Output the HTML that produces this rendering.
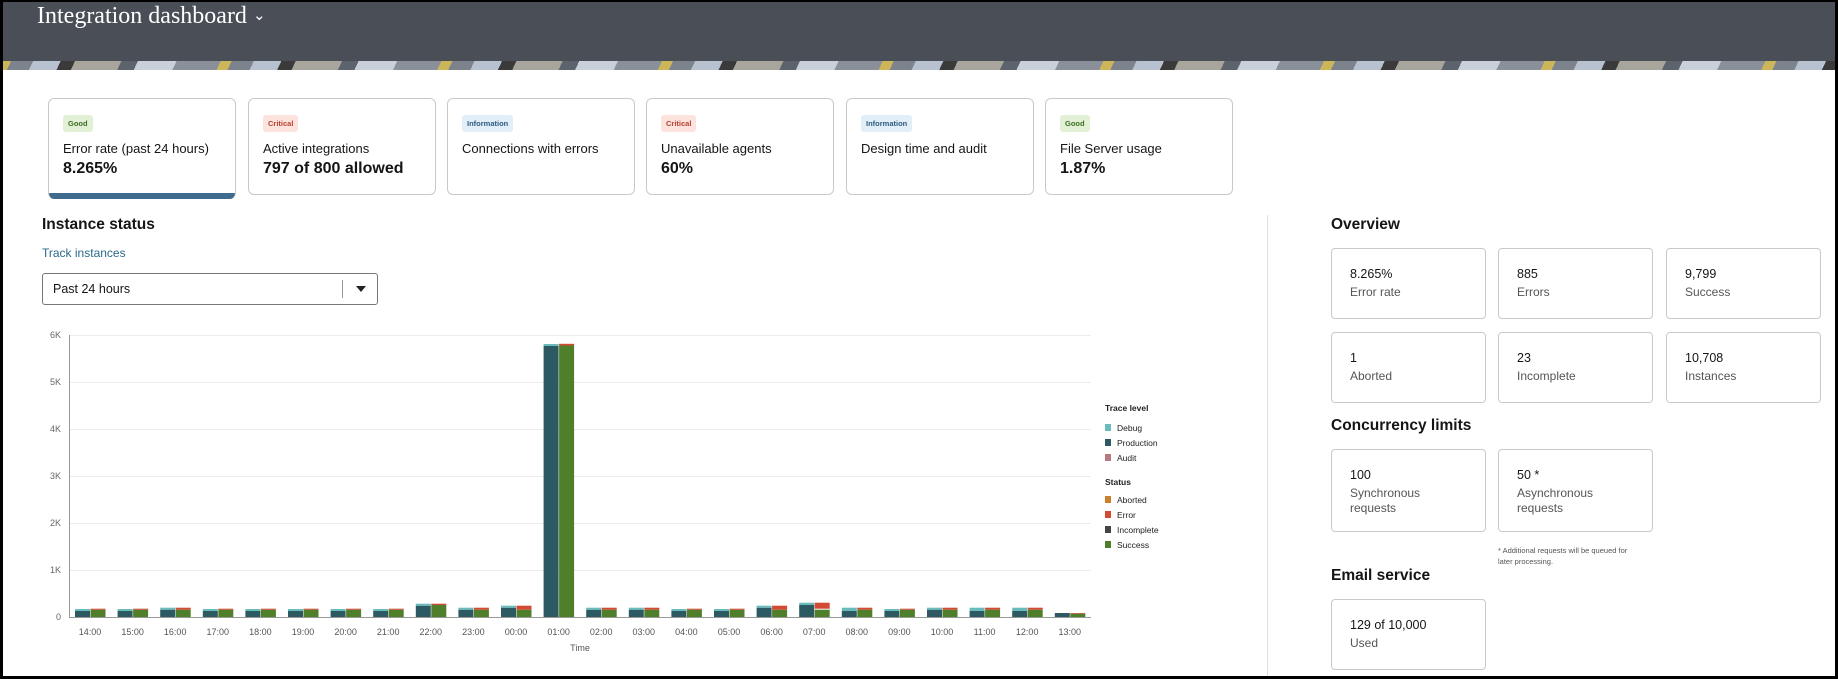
<!DOCTYPE html>
<html><head><meta charset="utf-8"><style>
*{margin:0;padding:0;box-sizing:border-box}
body{width:1838px;height:679px;overflow:hidden;background:#fff;font-family:"Liberation Sans",sans-serif;color:#161513;position:relative}
.frame{position:absolute;left:0;top:0;width:1838px;height:679px;border:3px solid #000;border-top-width:2px;pointer-events:none;z-index:10}
.hdr{position:absolute;left:0;top:0;width:1838px;height:61px;background:#4a4e57}
.pat{position:absolute;left:0;top:61px;width:1838px;height:9px;background:repeating-linear-gradient(115deg,#cdb65a 0 10px,#7d838c 10px 30px,#b8c1cf 30px 55px,#3a3a3a 55px 68px,#a8a59c 68px 110px,#5d636c 110px 125px,#c9d0da 125px 160px,#8a9099 160px 200px)}
.title{position:absolute;left:37px;top:3px;font-family:"Liberation Serif",serif;font-size:24px;color:#fff}
.kpi{position:absolute;top:98px;width:188px;height:97px;border:1px solid #c9c9c9;border-radius:6px;background:#fff;overflow:hidden}
.kpi .b{position:absolute;left:14px;top:16px;font-size:7.5px;font-weight:bold;padding:4px 5px;border-radius:3px}
.good{background:#e2f1d6;color:#3c6e21}.crit{background:#fde3de;color:#b3412f}.info{background:#e2eef8;color:#2c5c80}
.kpi .l{position:absolute;left:14px;top:42px;font-size:13px}
.kpi .v{position:absolute;left:14px;top:61px;font-size:16px;font-weight:bold}
.h{position:absolute;font-size:15.5px;font-weight:bold}
.card{position:absolute;width:155px;border:1px solid #c9c9c9;border-radius:4px;background:#fff}
.card .n{position:absolute;left:18px;top:18px;font-size:12.5px}
.card .t{position:absolute;left:18px;top:36px;font-size:12px;color:#555;line-height:15px}
</style></head><body>
<div class="hdr"></div><div class="pat"></div>
<div class="title">Integration dashboard <span style="font-family:'Liberation Sans';font-size:15px;position:relative;top:-3px">&#8964;</span></div>

<div class="kpi" style="left:48px;height:101px;border-bottom:none"><span class="b good">Good</span><div class="l">Error rate (past 24 hours)</div><div class="v">8.265%</div><div style="position:absolute;left:0;bottom:0;width:100%;height:6px;background:#3f6b8e"></div></div>
<div class="kpi" style="left:248px"><span class="b crit">Critical</span><div class="l">Active integrations</div><div class="v">797 of 800 allowed</div></div>
<div class="kpi" style="left:447px"><span class="b info">Information</span><div class="l">Connections with errors</div></div>
<div class="kpi" style="left:646px"><span class="b crit">Critical</span><div class="l">Unavailable agents</div><div class="v">60%</div></div>
<div class="kpi" style="left:846px"><span class="b info">Information</span><div class="l">Design time and audit</div></div>
<div class="kpi" style="left:1045px"><span class="b good">Good</span><div class="l">File Server usage</div><div class="v">1.87%</div></div>

<div style="position:absolute;left:1267px;top:215px;width:1px;height:464px;background:#e0e0e0"></div>

<div class="h" style="left:42px;top:216px">Instance status</div>
<div style="position:absolute;left:42px;top:246px;font-size:12px;color:#2a6a8c">Track instances</div>
<div style="position:absolute;left:42px;top:273px;width:336px;height:32px;border:1px solid #777;border-radius:3px">
<span style="position:absolute;left:10px;top:8px;font-size:12.5px">Past 24 hours</span>
<span style="position:absolute;right:34px;top:6px;width:1px;height:18px;background:#999"></span>
<svg style="position:absolute;right:11px;top:12px" width="10" height="6"><path d="M0 0H10L5 6Z" fill="#222"/></svg>
</div>

<svg style="position:absolute;left:0;top:320px" width="1250" height="359" viewBox="0 320 1250 359">
<defs>
<g id="A"><rect x="-15" y="0" width="15" height="6" fill="#2d5a62"/><rect x="-15" y="6" width="15" height="2" fill="#6abcbc"/><rect x="0.5" y="0" width="15" height="7.3" fill="#4f7f2a"/><rect x="0.5" y="7.3" width="15" height="1" fill="#d24a34"/></g>
<g id="B"><rect x="-15" y="0" width="15" height="7.3" fill="#2d5a62"/><rect x="-15" y="7.3" width="15" height="2" fill="#6abcbc"/><rect x="0.5" y="0" width="15" height="7.3" fill="#4f7f2a"/><rect x="0.5" y="7.3" width="15" height="2" fill="#d24a34"/></g>
<g id="C"><rect x="-15" y="0" width="15" height="9.3" fill="#2d5a62"/><rect x="-15" y="9.3" width="15" height="2" fill="#6abcbc"/><rect x="0.5" y="0" width="15" height="7.3" fill="#4f7f2a"/><rect x="0.5" y="7.3" width="15" height="4" fill="#d24a34"/></g>
<g id="D"><rect x="-15" y="0" width="15" height="6" fill="#2d5a62"/><rect x="-15" y="6" width="15" height="3.3" fill="#6abcbc"/><rect x="0.5" y="0" width="15" height="7.3" fill="#4f7f2a"/><rect x="0.5" y="7.3" width="15" height="2" fill="#d24a34"/></g>
</defs>
<g stroke="#ececec" stroke-width="1">
<line x1="69" y1="335.5" x2="1091" y2="335.5"/><line x1="69" y1="382.5" x2="1091" y2="382.5"/><line x1="69" y1="429.5" x2="1091" y2="429.5"/><line x1="69" y1="476.5" x2="1091" y2="476.5"/><line x1="69" y1="523.5" x2="1091" y2="523.5"/><line x1="69" y1="570.5" x2="1091" y2="570.5"/>
</g>
<line x1="69.5" y1="335" x2="69.5" y2="617" stroke="#999"/>
<line x1="69" y1="617.5" x2="1091" y2="617.5" stroke="#999"/>
<g font-size="9" fill="#666" text-anchor="end" font-family="Liberation Sans">
<text x="61" y="338">6K</text><text x="61" y="385">5K</text><text x="61" y="432">4K</text><text x="61" y="479">3K</text><text x="61" y="526">2K</text><text x="61" y="573">1K</text><text x="61" y="620">0</text>
</g>
<g transform="translate(90,617) scale(1,-1)"><use href="#A"/></g>
<g transform="translate(132.6,617) scale(1,-1)"><use href="#A"/></g>
<g transform="translate(175.2,617) scale(1,-1)"><use href="#B"/></g>
<g transform="translate(217.8,617) scale(1,-1)"><use href="#A"/></g>
<g transform="translate(260.4,617) scale(1,-1)"><use href="#A"/></g>
<g transform="translate(303,617) scale(1,-1)"><use href="#A"/></g>
<g transform="translate(345.6,617) scale(1,-1)"><use href="#A"/></g>
<g transform="translate(388.2,617) scale(1,-1)"><use href="#A"/></g>
<g transform="translate(430.8,617) scale(1,-1)"><rect x="-15" y="0" width="15" height="11.3" fill="#2d5a62"/><rect x="-15" y="11.3" width="15" height="2" fill="#6abcbc"/><rect x="0.5" y="0" width="15" height="12" fill="#4f7f2a"/><rect x="0.5" y="12" width="15" height="1.3" fill="#d24a34"/></g>
<g transform="translate(473.4,617) scale(1,-1)"><use href="#B"/></g>
<g transform="translate(516,617) scale(1,-1)"><use href="#C"/></g>
<g transform="translate(558.6,617) scale(1,-1)"><rect x="-15" y="0" width="15" height="271" fill="#2d5a62"/><rect x="-15" y="271" width="15" height="2" fill="#6abcbc"/><rect x="0.5" y="0" width="15" height="271.5" fill="#4f7f2a"/><rect x="0.5" y="271.5" width="15" height="1.7" fill="#d24a34"/></g>
<g transform="translate(601.2,617) scale(1,-1)"><use href="#B"/></g>
<g transform="translate(643.8,617) scale(1,-1)"><use href="#B"/></g>
<g transform="translate(686.4,617) scale(1,-1)"><use href="#A"/></g>
<g transform="translate(729,617) scale(1,-1)"><use href="#A"/></g>
<g transform="translate(771.6,617) scale(1,-1)"><use href="#C"/></g>
<g transform="translate(814.2,617) scale(1,-1)"><rect x="-15" y="0" width="15" height="12" fill="#2d5a62"/><rect x="-15" y="12" width="15" height="2.3" fill="#6abcbc"/><rect x="0.5" y="0" width="15" height="7.3" fill="#4f7f2a"/><rect x="0.5" y="8.3" width="15" height="6" fill="#d24a34"/></g>
<g transform="translate(856.8,617) scale(1,-1)"><use href="#D"/></g>
<g transform="translate(899.4,617) scale(1,-1)"><use href="#A"/></g>
<g transform="translate(942,617) scale(1,-1)"><use href="#B"/></g>
<g transform="translate(984.6,617) scale(1,-1)"><use href="#D"/></g>
<g transform="translate(1027.2,617) scale(1,-1)"><use href="#D"/></g>
<g transform="translate(1069.8,617) scale(1,-1)"><rect x="-15" y="0" width="15" height="4" fill="#2d5a62"/><rect x="0.5" y="0" width="15" height="3.3" fill="#4f7f2a"/><rect x="0.5" y="3.3" width="15" height="0.7" fill="#d24a34"/></g>
<g font-size="9" fill="#555" text-anchor="middle" font-family="Liberation Sans">
<text x="90" y="635">14:00</text><text x="132.6" y="635">15:00</text><text x="175.2" y="635">16:00</text><text x="217.8" y="635">17:00</text><text x="260.4" y="635">18:00</text><text x="303" y="635">19:00</text><text x="345.6" y="635">20:00</text><text x="388.2" y="635">21:00</text><text x="430.8" y="635">22:00</text><text x="473.4" y="635">23:00</text><text x="516" y="635">00:00</text><text x="558.6" y="635">01:00</text><text x="601.2" y="635">02:00</text><text x="643.8" y="635">03:00</text><text x="686.4" y="635">04:00</text><text x="729" y="635">05:00</text><text x="771.6" y="635">06:00</text><text x="814.2" y="635">07:00</text><text x="856.8" y="635">08:00</text><text x="899.4" y="635">09:00</text><text x="942" y="635">10:00</text><text x="984.6" y="635">11:00</text><text x="1027.2" y="635">12:00</text><text x="1069.8" y="635">13:00</text>
<text x="580" y="651">Time</text>
</g>
<g font-size="8.5" fill="#222" font-family="Liberation Sans">
<text x="1105" y="411" font-weight="bold">Trace level</text>
<rect x="1105" y="424" width="6" height="7" fill="#6abcbc"/><text x="1117" y="431">Debug</text>
<rect x="1105" y="439" width="6" height="7" fill="#2d5a62"/><text x="1117" y="446">Production</text>
<rect x="1105" y="454" width="6" height="7" fill="#b87a80"/><text x="1117" y="461">Audit</text>
<text x="1105" y="485" font-weight="bold">Status</text>
<rect x="1105" y="496" width="6" height="7" fill="#c9822a"/><text x="1117" y="503">Aborted</text>
<rect x="1105" y="511" width="6" height="7" fill="#d24a34"/><text x="1117" y="518">Error</text>
<rect x="1105" y="526" width="6" height="7" fill="#444"/><text x="1117" y="533">Incomplete</text>
<rect x="1105" y="541" width="6" height="7" fill="#4f7f2a"/><text x="1117" y="548">Success</text>
</g>
</svg>

<div class="h" style="left:1331px;top:216px">Overview</div>
<div class="card" style="left:1331px;top:248px;height:71px"><div class="n">8.265%</div><div class="t">Error rate</div></div>
<div class="card" style="left:1498px;top:248px;height:71px"><div class="n">885</div><div class="t">Errors</div></div>
<div class="card" style="left:1666px;top:248px;height:71px"><div class="n">9,799</div><div class="t">Success</div></div>
<div class="card" style="left:1331px;top:332px;height:71px"><div class="n">1</div><div class="t">Aborted</div></div>
<div class="card" style="left:1498px;top:332px;height:71px"><div class="n">23</div><div class="t">Incomplete</div></div>
<div class="card" style="left:1666px;top:332px;height:71px"><div class="n">10,708</div><div class="t">Instances</div></div>
<div class="h" style="left:1331px;top:417px">Concurrency limits</div>
<div class="card" style="left:1331px;top:449px;height:83px"><div class="n">100</div><div class="t">Synchronous<br>requests</div></div>
<div class="card" style="left:1498px;top:449px;height:83px"><div class="n">50 *</div><div class="t">Asynchronous<br>requests</div></div>
<div style="position:absolute;left:1498px;top:545px;font-size:7.5px;color:#555;line-height:11px">* Additional requests will be queued for<br>later processing.</div>
<div class="h" style="left:1331px;top:567px">Email service</div>
<div class="card" style="left:1331px;top:599px;height:71px"><div class="n">129 of 10,000</div><div class="t">Used</div></div>

<div class="frame"></div>
</body></html>
